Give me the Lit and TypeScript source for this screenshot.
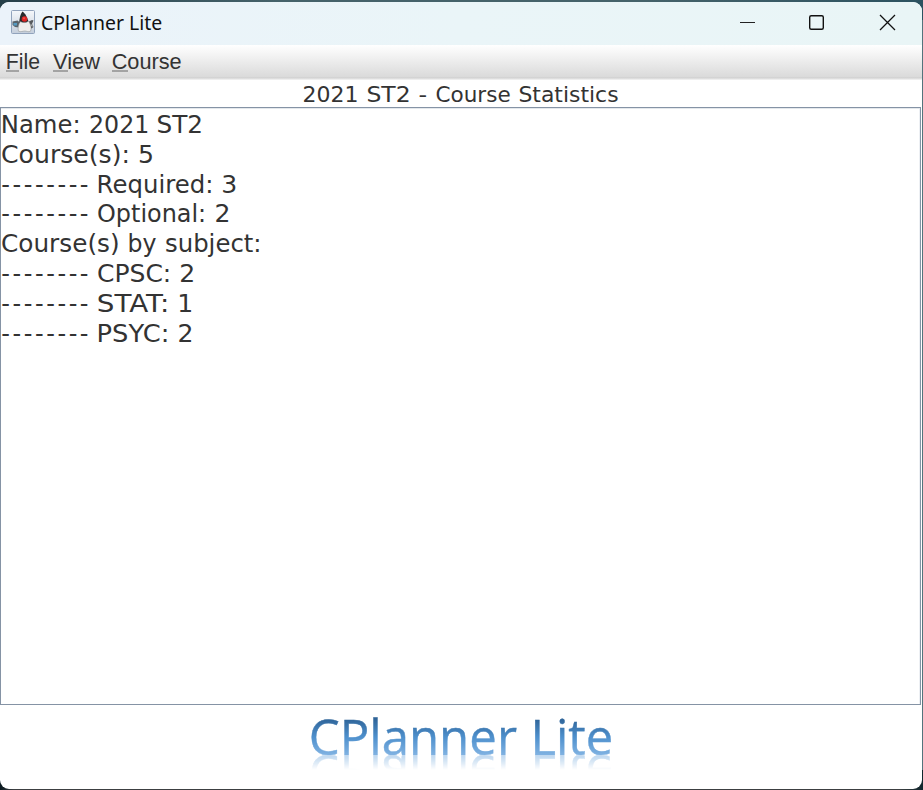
import { LitElement, html, css, svg } from "lit";
import { customElement } from "lit/decorators.js";

type Word = [text: string, x: number, width: number];
interface Line { dashed?: boolean; words: Word[]; }

const LINES: Line[] = [
  { words: [["Name:", 0.8, 79.8], ["2021", 89, 60.3], ["ST2", 156.5, 46.6]] },
  { words: [["Course(s):", 1, 129], ["5", 138, 16]] },
  { dashed: true, words: [["Required:", 96.6, 116.8], ["3", 221.3, 16]] },
  { dashed: true, words: [["Optional:", 97, 109.2], ["2", 214.4, 16]] },
  { words: [["Course(s)", 1, 118.6], ["by", 127.5, 29], ["subject:", 165, 96.6]] },
  { dashed: true, words: [["CPSC:", 97, 74.3], ["2", 179.3, 16]] },
  { dashed: true, words: [["STAT:", 96.8, 72.6], ["1", 177.2, 16]] },
  { dashed: true, words: [["PSYC:", 96.6, 72.8], ["2", 177.4, 16]] },
];

const HEADING: Word[] = [
  ["2021", 302.6, 56], ["ST2", 366.4, 44.2], ["-", 418.6, 8.6], ["Course", 435.5, 75.2], ["Statistics", 518.4, 100.2],
];

@customElement("app-root")
export class AppRoot extends LitElement {
  static styles = css`
    :host { display: block; width: 923px; height: 790px; overflow: hidden; }
    * { box-sizing: border-box; }
    svg { display: block; }
    .window { display: flex; flex-direction: column; height: 787px; width: 922px; background: #fff; border-radius: 9px; overflow: hidden; }
    .frame { padding-top: 2px; height: 790px; background: linear-gradient(90deg, #253f49, #45626a 30%, #45626a 70%, #2c5260) top / 100% 20px no-repeat, linear-gradient(90deg, #08181f 0, #3c3f41 14px, #3c3f41 900px, #10262d 100%) bottom / 100% 20px no-repeat, #53737c; }
    .title { display: flex; flex: none; height: 43px; background: linear-gradient(90deg, #ebf3fa, #eaf5f8 50%, #e9f5f6); }
    .menu { flex: none; height: 35px; background: linear-gradient(#fff, #dadada 32px, #cdcdcd 33px, #eee 34px); }
    .heading { flex: none; height: 27px; }
    .area { flex: none; width: 921px; height: 598px; border: 1px solid #8593a5; box-shadow: inset 0 1px #e4e8ec, inset -1px 0 #edf0f4; padding-top: 2px; }
    .line { height: 29.8px; margin-left: -1px; }
    text { fill: #333; }
    .ui { font: 20.5px "Noto Sans", sans-serif; fill: #111; }
    .menutext { font: 22px "Liberation Sans", sans-serif; }
    .body { font: 24px "DejaVu Sans", sans-serif; }
    .head { font: 21.4px "DejaVu Sans", sans-serif; }
    .footer { flex: 1; }
    .wordmark { width: 922px; height: 50px; -webkit-box-reflect: below 0 linear-gradient(transparent 70%, rgba(0, 0, 0, 0.08) 76%, rgba(0, 0, 0, 0.5)); }
    .logo { font: 49px "Open Sans", sans-serif; fill: url(#ink); stroke: url(#ink); stroke-width: 0.4; }
  `;

  private label([text, x, width]: Word, y: number, cls: string, adjust = "spacingAndGlyphs") {
    return svg`<text class=${cls} x=${x} y=${y} textLength=${width} lengthAdjust=${adjust}>${text}</text>`;
  }

  private duke() {
    return svg`
      <defs><linearGradient id="tile" x2="0" y2="1"><stop stop-color="#f5f8fb"/><stop offset="1" stop-color="#c4cedb"/></linearGradient></defs>
      <rect x="11.5" y="10.5" width="23" height="23" rx="1" fill="url(#tile)" stroke="#91a3bc"/>
      <path d="M12.500 21.500l5-1 2.500 2-1 5-4-.5-2.500-2z" fill="#59636b"/><path d="M13.500 23h3.500v2.500h-3.500z" fill="#559ac2"/>
      <path d="M28 22l4-2 1.500.5-1.500 3.500 1.500 3-2 1.500-4-2z" fill="#55595d"/><path d="M30 25l2.500-1v3z" fill="#a9adb0"/>
      <path d="M22.500 11.500c2.500 1.500 5 6 6.200 11l-4 2-5.500-1c.2-5 1-9.500 3.300-12z" fill="#292b2d"/>
      <path d="M20.500 21.500c2 1.500 6 1.500 8-.5 2 3 3.500 7 2 10.200-2 1.300-4-.2-5.500-.2-2 0-4.500 1.300-6.500.2-1-2.500 0-7.500 2-9.700z" fill="#eeeeed" stroke="#85888b" stroke-width=".5"/>
      <circle cx="24.500" cy="19" r="2.800" fill="#dd2424"/><circle cx="24" cy="18.300" r="1" fill="#f0554c"/>`;
  }

  render() {
    return html`<div class="frame"><main class="window">
      <header class="title"><svg width="922" height="43" viewBox="0 2 922 43">
        ${this.duke()}
        ${this.label(["CPlanner Lite", 41, 121.3], 30.3, "ui")}
        <path d="M740 22.5h15" stroke="#222" stroke-width="1.2"/>
        <rect x="809.7" y="15.7" width="13.6" height="13.6" rx="1.5" fill="none" stroke="#111" stroke-width="1.4"/>
        <path d="M880 15l15 15m0-15l-15 15" stroke="#111" stroke-width="1.3"/>
      </svg></header>
      <nav class="menu"><svg width="922" height="35" viewBox="0 45 922 35">
        ${this.label(["File", 5.8, 34.2], 69.4, "menutext")}
        ${this.label(["View", 53, 47], 69.4, "menutext")}
        ${this.label(["Course", 111.7, 70], 69.4, "menutext")}
        <path d="M6 71h13M53 71h15M112 71h16" stroke="#666" stroke-width="1.2"/>
      </svg></nav>
      <div class="heading"><svg width="922" height="27" viewBox="0 80 922 27">
        ${HEADING.map(w => this.label(w, 102, "head"))}
      </svg></div>
      <section class="area">${LINES.map(l => html`<div class="line"><svg width="400" height="29.8" viewBox="0 110 400 29.8">
        ${l.dashed ? this.label(["--------", 1.3, 87.2], 133, "body", "spacing") : ""}
        ${l.words.map(w => this.label(w, 133, "body"))}
      </svg></div>`)}</section>
      <footer class="footer"><div class="wordmark"><svg width="922" height="50" viewBox="0 705 922 50">
        <defs>
          <linearGradient id="ink" gradientUnits="userSpaceOnUse" x1="0" y1="718" x2="0" y2="756"><stop stop-color="#2d6296"/><stop offset=".5" stop-color="#4e90cd"/><stop offset="1" stop-color="#83b4e3"/></linearGradient>
        </defs>
        ${this.label(["CPlanner", 308.7, 208.3], 755.3, "logo")}
        ${this.label(["Lite", 530.4, 82.8], 755.3, "logo")}
      </svg></div></footer>
    </main></div>`;
  }
}
